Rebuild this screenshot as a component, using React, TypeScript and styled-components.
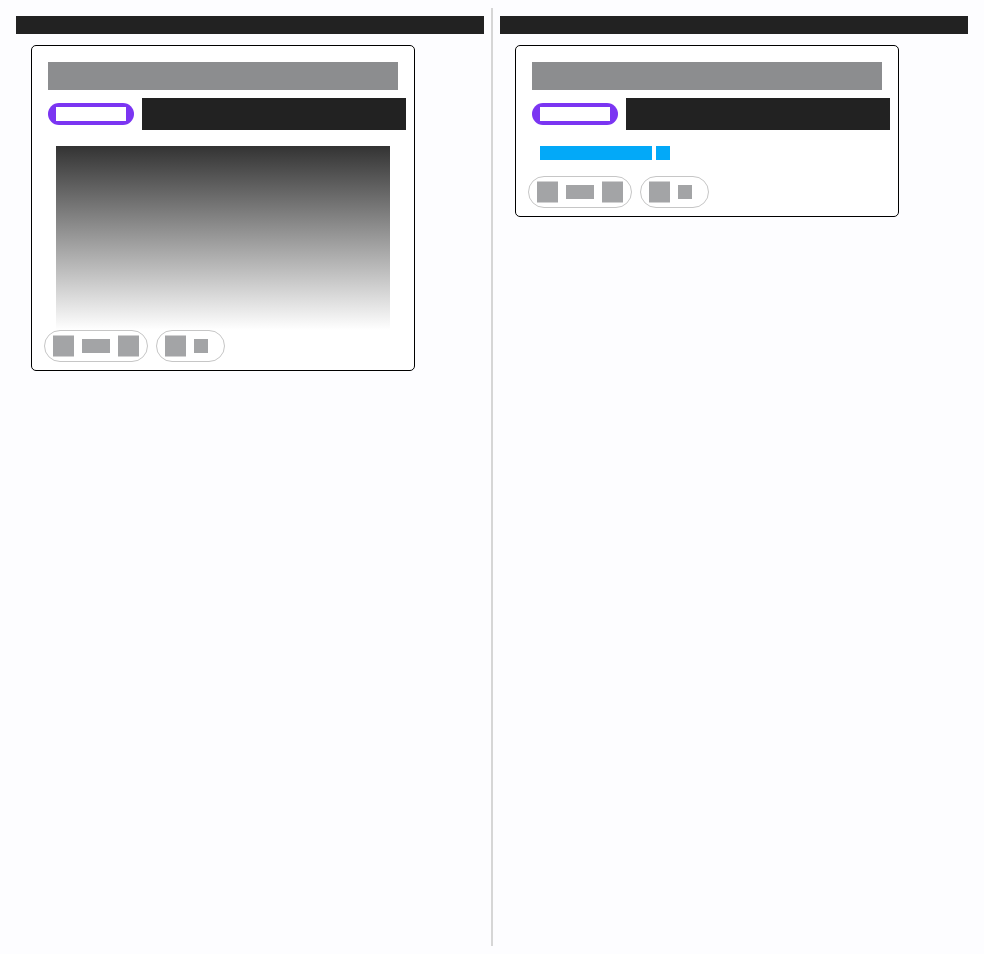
import React from "react";
import styled, { createGlobalStyle } from "styled-components";

const GlobalStyle = createGlobalStyle`
  * {
    box-sizing: border-box;
  }
  body {
    margin: 0;
    background: #fdfdff;
    font-family: Roboto, "Liberation Sans", sans-serif;
  }
`;

const Page = styled.main`
  display: grid;
  grid-template-columns: 1fr 2px 1fr;
  column-gap: 7px;
  min-height: 100vh;
  padding: 8px 16px;
`;

const Pane = styled.section`
  min-width: 0;
  padding-top: 8px;
`;

const Divider = styled.div`
  background: #d6d6d6;
`;

const PaneTitle = styled.header`
  height: 18px;
  background: #222222;
`;

const Card = styled.article`
  max-width: 384px;
  margin: 11px 0 0 15px;
  padding: 16px 8px 8px;
  border: 1px solid #000000;
  border-radius: 5px;
  background: #ffffff;
`;

const CardMeta = styled.div`
  height: 28px;
  margin: 0 8px;
  background: #8c8d8f;
`;

const TitleRow = styled.div`
  display: flex;
  align-items: center;
  gap: 8px;
  margin-top: 8px;
  padding-left: 8px;
`;

const Badge = styled.div`
  width: 86px;
  padding: 4px 8px;
  border-radius: 11px;
  background: #7b35f2;
`;

const BadgeLabel = styled.div`
  height: 14px;
  background: #ffffff;
`;

const CardTitle = styled.div`
  flex: 1;
  height: 32px;
  background: #222222;
`;

const Excerpt = styled.div`
  height: 184px;
  margin: 16px 16px 0;
  background: linear-gradient(#333333, #ffffff);
`;

const LinkRow = styled.div`
  display: flex;
  gap: 4px;
  margin: 16px;
`;

const LinkBlock = styled.div<{ $width: number }>`
  width: ${(p) => p.$width}px;
  height: 14px;
  background: #03a9f8;
`;

const Actions = styled.footer`
  display: flex;
  gap: 8px;
  padding-left: 4px;
`;

const Pill = styled.button<{ $endSpace: number }>`
  display: flex;
  align-items: center;
  gap: 8px;
  height: 32px;
  padding: 0 ${(p) => p.$endSpace}px 0 8px;
  border: 1px solid #c6c6c6;
  border-radius: 16px;
  background: #ffffff;
  cursor: pointer;
`;

const Count = styled.span<{ $width: number }>`
  width: ${(p) => p.$width}px;
  height: 14px;
  background: #a3a4a6;
`;

const Icon = styled.svg`
  display: block;
  width: 21px;
  height: 22px;
  fill: #a3a4a6;
`;

function BlockIcon() {
  return (
    <Icon viewBox="0 0 21 22" aria-hidden="true">
      <rect y="0.5" width="21" height="21" />
    </Icon>
  );
}

function PostCard({ children }: { children: React.ReactNode }) {
  return (
    <Card>
      <CardMeta />
      <TitleRow>
        <Badge>
          <BadgeLabel />
        </Badge>
        <CardTitle />
      </TitleRow>
      {children}
      <Actions>
        <Pill type="button" aria-label="Vote" $endSpace={8}>
          <BlockIcon />
          <Count $width={28} />
          <BlockIcon />
        </Pill>
        <Pill type="button" aria-label="Comments" $endSpace={16}>
          <BlockIcon />
          <Count $width={14} />
        </Pill>
      </Actions>
    </Card>
  );
}

export default function App() {
  return (
    <>
      <GlobalStyle />
      <Page>
        <Pane>
          <PaneTitle />
          <PostCard>
            <Excerpt />
          </PostCard>
        </Pane>
        <Divider />
        <Pane>
          <PaneTitle />
          <PostCard>
            <LinkRow>
              <LinkBlock $width={112} />
              <LinkBlock $width={14} />
            </LinkRow>
          </PostCard>
        </Pane>
      </Page>
    </>
  );
}
